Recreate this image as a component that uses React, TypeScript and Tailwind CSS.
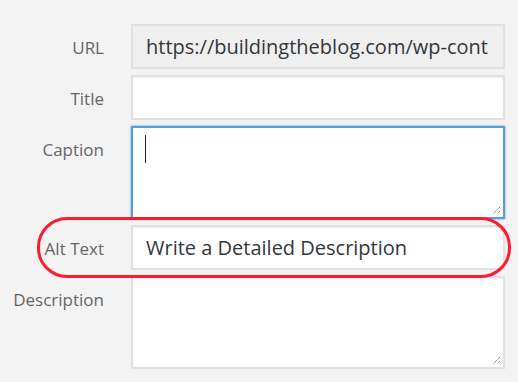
import React from 'react'

const font = { fontFamily: '"Open Sans", "Noto Sans", "Liberation Sans", sans-serif' }

function Grip() {
  return (
    <svg className="absolute right-[2px] bottom-[2px]" width="10" height="10" viewBox="0 0 10 10">
      <line x1="9" y1="2" x2="2" y2="9" stroke="#555" strokeWidth="1" strokeDasharray="1 1" />
      <line x1="9" y1="6" x2="6" y2="9" stroke="#555" strokeWidth="1" strokeDasharray="1 1" />
    </svg>
  )
}

function Row({ label, children }: { label: string; children: React.ReactNode }) {
  return (
    <div className="flex">
      <div className="w-[105px] shrink-0 pt-[12px] pr-[1px] text-right text-[17px] leading-[24px] text-[#666]">
        {label}
      </div>
      <div className="ml-[26px] w-[374px]">{children}</div>
    </div>
  )
}

export default function App() {
  return (
    <div className="relative h-[382px] w-[518px] overflow-hidden bg-[#f3f3f3]" style={font}>
      <div className="flex flex-col gap-[6px] pt-[24px]">
        <Row label="URL">
          <div className="flex h-[45px] items-center overflow-hidden whitespace-nowrap border-2 border-[#e0e0e0] bg-[#efefef] pl-[13px] text-[20px] text-[#32373c]">
            https://buildingtheblog.com/wp-cont
          </div>
        </Row>
        <Row label="Title">
          <div className="h-[45px] border-2 border-[#e0e0e0] bg-white shadow-[inset_0_1px_2px_rgba(0,0,0,0.07)]" />
        </Row>
        <Row label="Caption">
          <div className="relative h-[93px] border-2 border-[#5b9dd9] bg-white shadow-[0_0_2px_rgba(30,140,190,0.8)]">
            <div className="absolute left-[12px] top-[7px] h-[28px] w-[1px] bg-[#222]" />
            <Grip />
          </div>
        </Row>
        <Row label="Alt Text">
          <div className="flex h-[45px] items-center whitespace-nowrap border-2 border-[#e0e0e0] bg-white pl-[13px] text-[20px] text-[#32373c] shadow-[inset_0_1px_2px_rgba(0,0,0,0.07)]">
            Write a Detailed Description
          </div>
        </Row>
        <Row label="Description">
          <div className="relative h-[93px] border-2 border-[#e0e0e0] bg-white shadow-[inset_0_1px_2px_rgba(0,0,0,0.07)]">
            <Grip />
          </div>
        </Row>
      </div>
      {/* highlight ring around Alt Text */}
      <div className="pointer-events-none absolute left-[37px] top-[217px] h-[61px] w-[474px] rounded-[30px] border-[3px] border-[#ff1a2e]" />
    </div>
  )
}
